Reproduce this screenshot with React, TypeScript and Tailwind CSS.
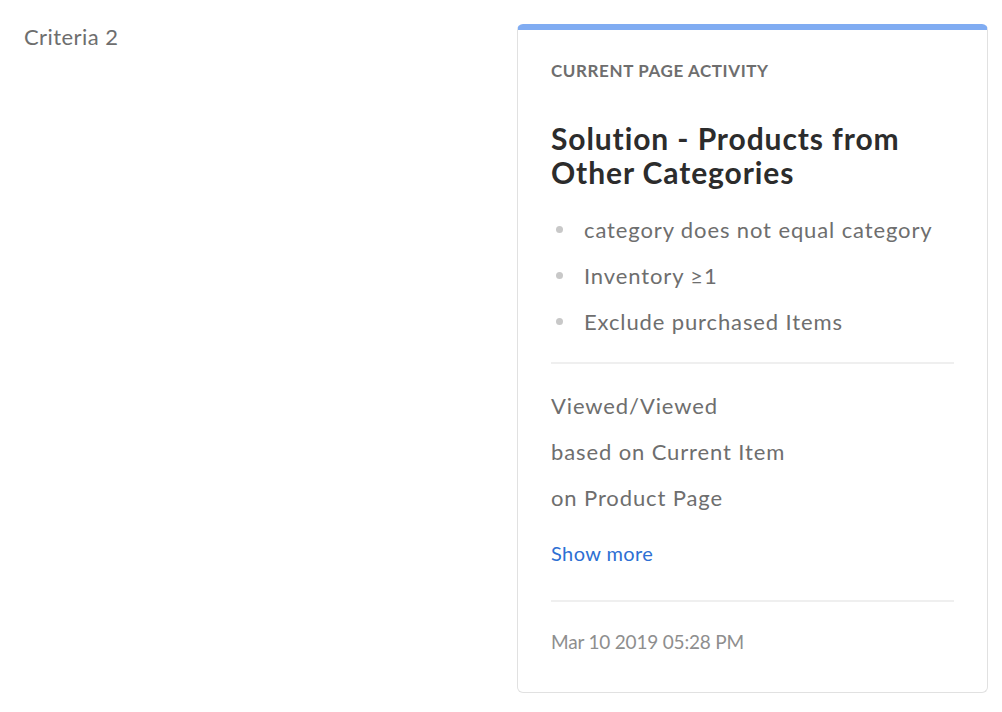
export default function App() {
  const rules = [
    "category does not equal category",
    "Inventory \u22651",
    "Exclude purchased Items",
  ];
  const details = ["Viewed/Viewed", "based on Current Item", "on Product Page"];

  return (
    <div className="flex min-h-[712px] w-full items-start justify-between bg-white pl-6 pr-[14px] pt-6 font-['Lato','Open_Sans',sans-serif]">
      <div className="text-[22px] leading-[26px] tracking-[0.02em] text-[#6e6e6e]">Criteria 2</div>
      <div className="w-[471px] overflow-hidden rounded-md border border-t-[6px] border-[#e1e1e1] border-t-[#80acf2] bg-white px-[33px] pb-[38px]">
        <div className="pt-[30px] text-[17px] font-bold leading-[22px] tracking-[0.035em] text-[#6e6e6e]">
          CURRENT PAGE ACTIVITY
        </div>
        <h2 className="mt-[39px] text-[30px] font-bold leading-[34px] tracking-[0.03em] text-[#2c2c2c]">
          Solution - Products from Other Categories
        </h2>
        <ul className="mt-[17px] flex flex-col">
          {rules.map((r) => (
            <li key={r} className="flex h-[46px] items-center text-[22px] tracking-[0.04em] text-[#6e6e6e]">
              <span className="ml-[5px] mr-[21px] h-[7px] w-[7px] rounded-full bg-[#c8c8c8]" />
              {r}
            </li>
          ))}
        </ul>
        <div className="mt-[18px] h-[2px] bg-[#efefef]" />
        <div className="mt-[18px] flex flex-col">
          {details.map((d) => (
            <div key={d} className="flex h-[46px] items-center text-[22px] tracking-[0.04em] text-[#6e6e6e]">
              {d}
            </div>
          ))}
        </div>
        <div className="mt-[10px] flex h-[46px] items-center text-[20px] tracking-[0.02em] text-[#2d6fd3]">Show more</div>
        <div className="mt-[24px] h-[2px] bg-[#efefef]" />
        <div className="mt-[28px] text-[19px] leading-[24px] tracking-[-0.01em] text-[#8e8e8e]">Mar 10 2019 05:28 PM</div>
      </div>
    </div>
  );
}
